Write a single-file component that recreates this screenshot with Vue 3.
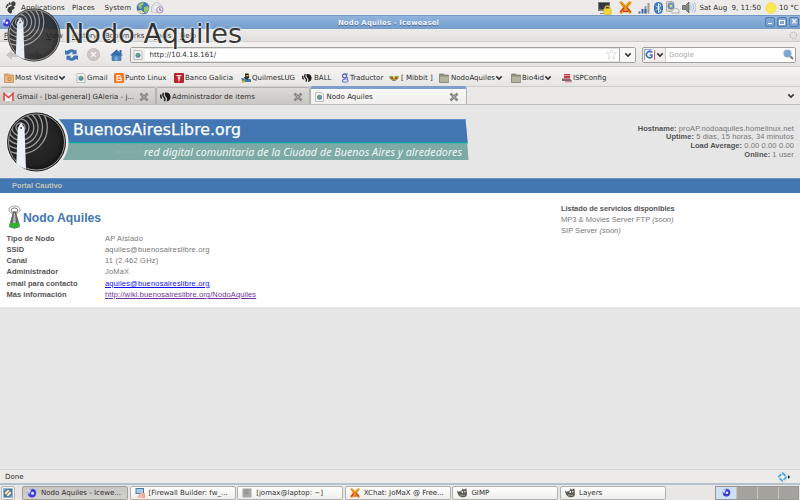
<script setup>
const menus = ['File', 'Edit', 'View', 'History', 'Bookmarks', 'Tools', 'Help']

const bookmarks = [
  { icon: 'folder-star', label: 'Most Visited', w: 72, gap: 11, more: true },
  { icon: 'page', label: 'Gmail', w: 38, gap: 11 },
  { icon: 'blogger', label: 'Punto Linux', w: 60, gap: 11 },
  { icon: 'galicia', label: 'Banco Galicia', w: 67, gap: 11 },
  { icon: 'penguin', label: 'QuilmesLUG', w: 61, gap: 11 },
  { icon: 'ball', label: 'BALL', w: 38, gap: 12 },
  { icon: 'gletter', label: 'Traductor', w: 49, gap: 10 },
  { icon: 'mibbit', label: '[ Mibbit ]', w: 50, gap: 12 },
  { icon: 'folder', label: 'NodoAquiles', w: 72, gap: 12, more: true },
  { icon: 'folder', label: 'Bio4id', w: 51, gap: 11, more: true },
  { icon: 'isp', label: 'ISPConfig', w: 60, gap: 11 },
]

const status = [
  ['Hostname:', 'proAP.nodoaquiles.homelinux.net'],
  ['Uptime:', '5 dias, 15 horas, 34 minutos'],
  ['Load Average:', '0.00 0.00 0.00'],
  ['Online:', '1 user'],
]

const details = [
  { k: 'Tipo de Nodo', v: 'AP Aislado' },
  { k: 'SSID', v: 'aquiles@buenosaireslibre.org' },
  { k: 'Canal', v: '11 (2.462 GHz)' },
  { k: 'Administrador', v: 'JoMaX' },
  { k: 'email para contacto', v: 'aquiles@buenosaireslibre.org', link: 'new' },
  { k: 'Más información', v: 'http://wiki.buenosaireslibre.org/NodoAquiles', link: 'seen' },
]

const tasks = [
  { icon: 'weasel', label: 'Nodo Aquiles - Icewe...', active: true },
  { icon: 'firewall', label: '[Firewall Builder: fw_...' },
  { icon: 'terminal', label: '[jomax@laptop: ~]' },
  { icon: 'xchat', label: 'XChat: JoMaX @ Free...' },
  { icon: 'gimp', label: 'GIMP' },
  { icon: 'gimp', label: 'Layers' },
]
</script>

<template>
  <div class="screen">
    <svg class="defs" width="0" height="0">
      <defs>
        <radialGradient id="disc" cx="45%" cy="45%" r="60%">
          <stop offset="0" stop-color="#2c2c2c" /><stop offset=".75" stop-color="#222" /><stop offset="1" stop-color="#0c0c0c" />
        </radialGradient>
        <clipPath id="discClip"><circle cx="30" cy="30" r="27.5" /></clipPath>
        <symbol id="logo" viewBox="0 0 60 60">
          <circle cx="30" cy="30" r="29.5" fill="#222" />
          <circle cx="30" cy="30" r="28" fill="url(#disc)" stroke="#aaa" stroke-width=".9" />
          <g clip-path="url(#discClip)" fill="none" stroke="#9c9c9c" stroke-width="1.300">
            <circle cx="14" cy="15.500" r="4.500" /><circle cx="14" cy="15.500" r="8.500" /><circle cx="14.500" cy="15.500" r="12.800" />
            <circle cx="14.500" cy="15.500" r="17" /><circle cx="14.500" cy="15.500" r="21.500" /><circle cx="14.500" cy="15.500" r="26.300" />
          </g>
          <path d="M14.600 10.500 L11.300 16 L9.800 52 Q14 55.500 19.500 57 L18 16 Z" fill="#edf0f8" />
          <circle cx="14.600" cy="16" r=".9" fill="#333" />
        </symbol>
        <symbol id="page" viewBox="0 0 10 10">
          <path d="M1 .5h6.500l1.500 1.500v7.500h-8z" fill="#f2f2ee" stroke="#aaa" stroke-width=".7" />
          <circle cx="5" cy="5.300" r="2.500" fill="#5c8baa" /><path d="M3.200 4.500l2-1.500 1 1.500-1.500 1.500z" fill="#75a96e" />
        </symbol>
        <symbol id="folder" viewBox="0 0 10 10">
          <path d="M.5 1h4l1 1h4v7.500h-9z" fill="#8e907d" stroke="#777966" stroke-width=".7" /><path d="M1 3.500h8.500v5.500h-8.500z" fill="#b3b49e" />
        </symbol>
        <symbol id="folder-star" viewBox="0 0 10 10">
          <path d="M.5 1h4l1 1h4v7.500h-9z" fill="#dca56f" stroke="#c58b55" stroke-width=".7" /><path d="M1 3.500h8v5.500h-8z" fill="#e9b887" />
          <circle cx="5.500" cy="6" r="1.700" fill="none" stroke="#c77b34" stroke-width=".9" />
        </symbol>
        <symbol id="blogger" viewBox="0 0 10 10">
          <rect width="10" height="10" rx="1.500" fill="#f5741c" />
          <path d="M3 2.500h2.500a1.300 1.300 0 0 1 0 2.500h-2.500h3a1.400 1.400 0 0 1 0 2.800h-3z" fill="none" stroke="#fff" stroke-width="1.100" />
        </symbol>
        <symbol id="galicia" viewBox="0 0 10 10">
          <rect width="10" height="10" rx="1" fill="#b9232d" /><path d="M2.500 2h5v1.200h-2v5.300h-1.200v-5.300h-1.800z" fill="#f7dede" /><circle cx="5" cy="5" r="1.300" fill="#f7dede" />
        </symbol>
        <symbol id="penguin" viewBox="0 0 10 10">
          <path d="M4 .5h3.500l.8 4-2 1.500h-2z" fill="#20252c" /><path d="M0 5l3 .5 1 1.500 3-1.500 3 1v2.500h-8z" fill="#397aa0" /><path d="M3 4h4v2.500h-3z" fill="#2a3036" /><path d="M5 2h2.500v1.500h-2z" fill="#e9ad28" /><path d="M.5 7.500h3.500v2h-3z" fill="#cfae37" />
        </symbol>
        <symbol id="ball" viewBox="0 0 11 10">
          <path d="M5 .6q5-.6 5.600 4.200q-.2 4-4.100 4.700q1.500-3-.5-4.500q-1.800-2-1-4.400z" fill="#1b1b1b" />
          <path d="M3.600.8q-1.500 2.700.4 4.500t.2 3.700M1.200 2.500q-1.200 2.200.6 4" fill="none" stroke="#222" stroke-width="1.500" />
        </symbol>
        <symbol id="gletter" viewBox="0 0 10 10">
          <circle cx="4.500" cy="3" r="2" fill="none" stroke="#5b60cf" stroke-width="1.300" /><path d="M5 1h3M6 4q3 1 1 2q3 3-2 3.200q-4 0-2-2.500l3-1" fill="none" stroke="#6b70d8" stroke-width="1.100" />
        </symbol>
        <symbol id="mibbit" viewBox="0 0 11 10">
          <path d="M0 3l3-.5 2.500 1 2.500-1 3 .5-1 3-2 1h-5l-2-1z" fill="#8fae31" /><path d="M2 4.200h2.800v2.300h-2.800zM6.200 4.200h2.800v2.300h-2.800z" fill="#c1411f" /><path d="M4.600 4h1.600l-.6 2z" fill="#eee" /><path d="M3 7h5l-1 1h-3z" fill="#477b28" />
        </symbol>
        <symbol id="isp" viewBox="0 0 10 10">
          <path d="M2 1h6v1.500h-6zM2 3h6v2h-6z" fill="#c34048" /><path d="M0 5.500h8l2 2.500h-10z" fill="#6c6c70" /><path d="M1 6.300h6M3 8.800h7" stroke="#d44b50" stroke-width=".8" />
        </symbol>
        <symbol id="weasel" viewBox="0 0 10 10">
          <circle cx="5" cy="5" r="4.500" fill="#9a9df0" /><path d="M5 1q4 0 4 4t-4 4.500q-4-.5-4-4l2 1q0-3 2-5.500z" fill="#3a3ecb" /><circle cx="5.500" cy="5.300" r="1.500" fill="#e5e9fb" /><circle cx="2" cy="3" r="1.400" fill="#d5dafa" />
        </symbol>
        <symbol id="firewall" viewBox="0 0 10 10">
          <rect x=".5" width="8.500" height="6" fill="#4e7ca8" /><rect x="1.500" y="1" width="6.500" height="4" fill="#a8cae4" /><path d="M2 9.500l4-5 4 1v4.500z" fill="#ef9b7c" /><path d="M3 8h6M5 6h4M6 6v4" stroke="#fbe0d4" stroke-width=".6" />
        </symbol>
        <symbol id="terminal" viewBox="0 0 10 10"><rect x=".5" y=".5" width="9" height="9" rx="1" fill="#a6a6a4" stroke="#cfcfcd" /><path d="M2 2.500h5M2 4h4M2 5.500h5" stroke="#8a8a88" stroke-width=".7" /></symbol>
        <symbol id="xchat" viewBox="0 0 10 10">
          <path d="M0 1l2-1 3 3 3-3 2 1-3 4 3 4-2 1-3-3-3 3-2-1 3-4z" fill="#f0a020" /><path d="M1 8.500l3-3.500M9 8.500l-3-3.500M3 8h4" stroke="#c9441d" stroke-width="1.200" /><path d="M1.500 1.500l3.500 3.500 3.500-3.500" fill="none" stroke="#d06e12" stroke-width=".7" />
        </symbol>
        <symbol id="gimp" viewBox="0 0 10 10">
          <path d="M0 2.500l1.500 1.200q2-.3 3.500-1.500l.5-2 1.500 1.500 2.300-1.500q.9 4.500.4 7t-4.700 2q-4.500-.5-5-6.700z" fill="#5e5a51" /><circle cx="5.300" cy="4" r=".9" fill="#ece9e2" /><circle cx="7.800" cy="3.700" r=".8" fill="#ece9e2" /><path d="M3 7l5 .5" stroke="#b5aea0" stroke-width=".8" />
        </symbol>
        <symbol id="chev" viewBox="0 0 8 6"><path d="M1.300 1.400l2.700 2.700 2.700-2.700" fill="none" stroke="#333" stroke-width="1.500" /></symbol>
        <symbol id="close" viewBox="0 0 10 10"><path d="M1.500 1.500l7 7M8.500 1.500l-7 7" stroke="#858580" stroke-width="2.600" /><path d="M2.500 2.500l5 5M7.500 2.500l-5 5" stroke="#b1b1ac" stroke-width=".8" /></symbol>
      </defs>
    </svg>

    <header class="panel">
      <svg class="foot" viewBox="0 0 12 14"><ellipse cx="8.500" cy="3" rx="2.500" ry="2.700" /><ellipse cx="4.500" cy="3" rx="1.200" ry="1.700" /><ellipse cx="2.200" cy="4.500" rx="1" ry="1.400" /><ellipse cx="1" cy="6.500" rx=".8" ry="1.100" /><path d="M3 7q5-3 7 0q0 2-3 3q1 2-1 3.500q-3 0-4-4z" /></svg>
      <nav class="panel-menu"><span class="apps">Applications</span><span class="places">Places</span><span class="system">System</span></nav>
      <svg class="globe" viewBox="0 0 14 14"><circle cx="7" cy="7" r="6.300" fill="#4279b8" /><path d="M2 4q3-3 6-3l-1 3-2 1 1 2-2 1zM8 6l4-1 1 3-3 4-2-2z" fill="#9cc56a" /><path d="M1 10q2 4 8 2l-4-3z" fill="#e3d79e" /></svg>
      <svg class="mail" viewBox="0 0 14 14"><path d="M.7 6l5-5 6 4v7h-11z" fill="#eee" stroke="#aaa" stroke-width=".7" /><path d="M3 5h6v4h-6z" fill="#fff" stroke="#bbb" stroke-width=".6" /><circle cx="9.500" cy="9.500" r="3.500" fill="#e7deef" stroke="#a68bb8" /><path d="M9.500 7v3h2" fill="none" stroke="#8b6aa5" /></svg>
      <div class="tray">
        <svg class="t-lock" viewBox="0 0 14 14"><path d="M0 1h12v9h-12z" fill="#777" /><path d="M1 2h10v6h-10z" fill="#35383a" /><path d="M2 12h7v1h-7z" fill="#888" /><path d="M7 8q0-3 2.500-3t2.500 3" fill="none" stroke="#d9ba20" stroke-width="1.300" /><rect x="5.700" y="7.500" width="7.500" height="6" rx="1" fill="#f1d836" stroke="#c6a91e" stroke-width=".5" /></svg>
        <svg class="t-x"><use href="#xchat" /></svg>
        <svg class="t-sig" viewBox="0 0 12 12"><path d="M.5 9.500h2v2h-2z" fill="#3564a6" /><path d="M3.500 7h2v4.500h-2z" fill="#3564a6" /><path d="M6.500 4h2v7.500h-2zM9.500 1h2v10.500h-2z" fill="#999" /><path d="M6.500 7h2v4.500h-2z" fill="#3564a6" /></svg>
        <svg class="t-bt" viewBox="0 0 9 12"><rect width="9" height="12" rx="4.500" fill="#3c77bd" /><path d="M2 3.500l5 5-2.500 2v-9l2.500 2-5 5" fill="none" stroke="#fff" stroke-width=".9" /></svg>
        <svg class="t-net" viewBox="0 0 14 13"><rect x=".5" y=".5" width="7" height="10" rx="1" fill="#d7d7d0" stroke="#999" stroke-width=".7" /><circle cx="5" cy="5" r="3.200" fill="#6c9cc9" stroke="#777" stroke-width=".6" /><circle cx="5" cy="5" r="1.300" fill="#e9d66d" /><path d="M6 12q-1.500-2 1-3 1-3 4-1.500 3 1 2 4.500z" fill="#eee" stroke="#999" stroke-width=".7" /></svg>
        <svg class="t-vol" viewBox="0 0 14 13"><path d="M.5 4.500h3l3.500-3.500v11l-3.500-3.500h-3z" fill="#888" stroke="#555" stroke-width=".7" /><path d="M8.500 4q1.500 2.500 0 5M10.300 2.500q3 4 0 8M12 1q4 5.500 0 11" fill="none" stroke="#8fb1de" stroke-width=".8" /></svg>
        <span class="clock">Sat Aug&nbsp; 9, 11:50</span>
        <svg class="t-sun" viewBox="0 0 12 12"><circle cx="6" cy="6" r="5.300" fill="#f9e84f" stroke="#eedb57" stroke-width=".7" /></svg>
        <span class="temp">10 °C</span>
      </div>
    </header>

    <div class="titlebar">
      <svg class="wicon"><use href="#weasel" /></svg>
      <b>Nodo Aquiles - Iceweasel</b>
      <div class="wbtns"><i class="min"></i><i class="max"></i><i class="cls">×</i></div>
    </div>

    <div class="menubar">
      <span v-for="m in menus" :key="m" :class="'m-' + m.toLowerCase()"><u>{{ m[0] }}</u>{{ m.slice(1) }}</span>
      <svg class="throbber" viewBox="0 0 10 10"><circle cx="5" cy="5" r="3.500" fill="none" stroke="#bbb" stroke-width="1.500" stroke-dasharray="1.500 1.250" /></svg>
    </div>

    <div class="toolbar">
      <svg class="arrow" viewBox="0 0 14 12"><path d="M0 6l6-5v3h7v4h-7v3z" fill="#c6c6c4" /></svg>
      <svg class="arrow fwd" viewBox="0 0 14 12"><path d="M14 6l-6-5v3h-7v4h7v3z" fill="#bdbdbb" /></svg>
      <svg class="reload" viewBox="0 0 13 12"><path d="M0 5.500v-4.500l1.700 1q4-3.300 8.300-.6l1.500-1v4.800h-4.700l1.400-1.500q-2.500-1.500-4.200 1.800z" fill="#3c76b5" /><path d="M13 6.500v4.500l-1.700-1q-4 3.300-8.300.6l-1.500 1v-4.800h4.700l-1.400 1.500q2.500 1.500 4.200-1.800z" fill="#3c76b5" /></svg>
      <svg class="stop" viewBox="0 0 13 13"><circle cx="6.500" cy="6.500" r="6" fill="#cdc7c7" stroke="#bfb8b8" /><path d="M4.200 4.200l4.600 4.600M8.800 4.200l-4.600 4.600" stroke="#f5f2f2" stroke-width="1.500" /></svg>
      <svg class="home" viewBox="0 0 13 12"><path d="M2 5.500h9v6h-9z" fill="#4f87c0" stroke="#3868a0" stroke-width=".6" /><path d="M0 6.500l6.500-6 6.500 6z" fill="#386ca9" /><path d="M9.500 1h2v4h-2z" fill="#386ca9" /><path d="M5 7.500h2.500v4h-2.500z" fill="#7fabd7" /></svg>
      <div class="url">
        <span class="favi"><svg><use href="#page" /></svg></span>
        <span class="addr">http://10.4.18.161/</span>
        <svg class="star" viewBox="0 0 10 10"><path d="M5 .6l1.300 3h3.200l-2.500 2.100.9 3.500-2.900-2-2.900 2 .9-3.500-2.500-2.100h3.200z" fill="#fff" stroke="#ccc" stroke-width=".6" /></svg>
        <span class="drop"><svg><use href="#chev" /></svg></span>
      </div>
      <div class="search">
        <span class="engine"><svg class="g" viewBox="0 0 10 10"><rect width="10" height="10" fill="#fff" /><path d="M.4 10v-9.500h7" fill="none" stroke="#62a962" stroke-width=".8" /><path d="M9.600 1v9" stroke="#e45449" stroke-width=".9" /><path d="M1 .5h6" stroke="#8da9df" /><path d="M7.500 3.200q-2.500-2-4.500 0t0 4q2 1.600 4.200.2v-2h-2.200" fill="none" stroke="#3f65c5" stroke-width="1.400" /></svg><svg class="chev"><use href="#chev" /></svg></span>
        <span class="hint">Google</span>
        <svg class="lens" viewBox="0 0 11 11"><path d="M6 6l4 4" stroke="#777" stroke-width="2" /><circle cx="4.500" cy="4.500" r="3.500" fill="#74aadb" stroke="#93a9c0" stroke-width="1.200" /></svg>
      </div>
    </div>

    <div class="bookmarks">
      <div v-for="b in bookmarks" :key="b.label" class="bm" :style="{ width: b.w + 'px' }">
        <span class="bm-icon" :style="{ width: b.gap + 'px' }"><svg><use :href="'#' + b.icon" /></svg></span>
        <span>{{ b.label }}</span>
        <svg v-if="b.more" class="chev"><use href="#chev" /></svg>
      </div>
    </div>

    <div class="tabs">
      <div class="tab t1"><svg class="ti" viewBox="0 0 11 10"><path d="M0 1h11v8h-11z" fill="#f6eeee" /><path d="M1 9v-7.500l4.500 4 4.500-4v7.500" fill="none" stroke="#db4440" stroke-width="1.600" /></svg><span>Gmail - [bal-general] GAleria - j...</span><svg class="x"><use href="#close" /></svg></div>
      <div class="tab t2"><svg class="ti"><use href="#ball" /></svg><span>Administrador de items</span><svg class="x"><use href="#close" /></svg></div>
      <div class="tab t3"><svg class="ti"><use href="#page" /></svg><span>Nodo Aquiles</span><svg class="x"><use href="#close" /></svg></div>
      <svg class="alltabs"><use href="#chev" /></svg>
    </div>

    <main class="page">
      <div class="masthead">
        <svg class="banner" viewBox="0 0 470 73">
          <path d="M55 14.200H465.500L468.500 55H55Z" fill="#7eaaa6" />
          <path d="M55 14.200H465.500L467.700 37H55Z" fill="#4377b3" />
          <path d="M55 14.500H465.500" stroke="#6695c8" />
          <path d="M60 37.600H468" stroke="#0aa9a4" stroke-width="1.400" />
          <circle cx="37" cy="37" r="31.500" fill="#e9eaea" />
          <use href="#logo" x="6.500" y="7" width="60" height="60" />
          <path d="M117 47h26" stroke="#9bbebb" stroke-width="4" stroke-dasharray="1 1" opacity=".35" />
          <text x="73" y="30" class="brand" textLength="168">BuenosAiresLibre.org</text>
          <text x="144" y="50.500" class="tagline" textLength="318">red digital comunitaria de la Ciudad de Buenos Aires y alrededores</text>
        </svg>
        <div class="stats"><div v-for="s in status" :key="s[0]"><b>{{ s[0] }}</b> {{ s[1] }}</div></div>
      </div>
      <div class="nav">Portal Cautivo</div>
      <div class="content">
        <section class="node">
          <h1>
            <svg class="antenna" viewBox="0 0 13 25"><g fill="none" stroke="#999" stroke-width="1"><ellipse cx="6.500" cy="5" rx="5.800" ry="4" /><ellipse cx="6.500" cy="5.500" rx="3.500" ry="2.400" stroke="#777" /></g><path d="M5.500 7h2l4 14q-5 4-10 0z" fill="#6a6a6a" stroke="#333" stroke-width=".6" /><path d="M6 8h1l.8 11h-3z" fill="#bbb" /><path d="M2 18q4.500 2 9 0l1 4q-5.500 4-11 0z" fill="#27b52c" /><path d="M1 22q5.500 4 11 0v1q-5.500 3-11 0z" fill="#234c20" /></svg>
            <span>Nodo Aquiles</span>
          </h1>
          <dl>
            <template v-for="d in details" :key="d.k"><dt>{{ d.k }}</dt><dd><a v-if="d.link" :class="d.link">{{ d.v }}</a><template v-else>{{ d.v }}</template></dd></template>
          </dl>
        </section>
        <aside class="services">
          <b>Listado de servicios disponibles</b>
          <div>MP3 &amp; Movies Server FTP <em>(soon)</em></div>
          <div>SIP Server <em>(soon)</em></div>
        </aside>
      </div>
    </main>

    <div class="statusbar"><span>Done</span><svg viewBox="0 0 13 10"><path d="M4.500 1l4 4-4 4-4-4z" fill="#f3f8fb" stroke="#55a9dc" stroke-width="1.900" stroke-dasharray="4.200 1.400" /><path d="M10 3l2.200 2-2.200 2z" fill="#333" /></svg></div>

    <footer class="taskbar">
      <div class="desk"><svg viewBox="0 0 10 10"><rect x=".5" y=".5" width="9" height="9" fill="#3f77a6" /><path d="M5 1.500l3.500 3.500-3.500 3.500-3.500-3.500z" fill="#f5f3dc" /><path d="M0 0h2.500v2.500h-2.500zM7.500 7.500h2.500v2.500h-2.500z" fill="#89b2d1" /><path d="M3 7l4.500-4.500" stroke="#be9642" stroke-width="1.200" /></svg></div>
      <div class="tasks"><div v-for="t in tasks" :key="t.label" class="task" :class="{ active: t.active }"><svg><use :href="'#' + t.icon" /></svg><span>{{ t.label }}</span></div></div>
      <div class="spaces"><i class="on"><svg><use href="#weasel" /></svg></i><i></i><i></i><i></i></div>
    </footer>

    <div class="overlay"><svg class="mark"><use href="#logo" /></svg><span>Nodo Aquiles</span></div>
  </div>
</template>

<style>
body { margin: 0; overflow: hidden; }
</style>

<style scoped>
* { box-sizing: border-box; }
.screen { position: relative; width: 800px; height: 500px; overflow: hidden; display: flex; flex-direction: column; background: #ebeae8; font: 7.07px/10px "DejaVu Sans", sans-serif; color: #303030; white-space: nowrap; }
.defs { position: absolute; }
svg { display: block; flex: none; }
.panel { height: 15px; flex: none; display: flex; align-items: center; background: #ecebe9; padding-left: 5px; }
.foot { width: 12px; height: 13px; fill: #3d3f3d; }
.panel-menu { display: flex; padding-left: 4px; letter-spacing: .05px; }
.apps { width: 51px; }
.places { width: 32.500px; }
.system { width: 31.500px; }
.globe { width: 14px; height: 14px; }
.mail { width: 13px; height: 13px; margin-left: 1px; }
.tray { margin-left: auto; display: flex; align-items: center; }
.t-lock { width: 14px; height: 14px; margin-right: 7px; }
.t-x { width: 13px; height: 13px; margin-right: 6px; }
.t-sig { width: 12px; height: 12px; margin-right: 4px; }
.t-bt { width: 9px; height: 12px; margin-right: 3px; }
.t-net { width: 14px; height: 13px; margin-right: 2px; }
.t-vol { width: 14px; height: 13px; margin-right: 3.500px; }
.clock { width: 65.500px; }
.t-sun { width: 12px; height: 12px; }
.temp { width: 21px; margin-left: 2px; }
.titlebar { height: 14px; flex: none; display: grid; grid-template-columns: 100px 1fr 100px; align-items: center; background: linear-gradient(#5c83b5 0, #91b4dd 8%, #83a9d6 50%, #769ecb 100%); text-align: center; padding-right: 1px; }
.titlebar b { font-size: 7px; letter-spacing: .11px; color: #eff4fb; text-shadow: 0 1px #4c6d97; padding: 1px 22px 0 0; }
.wicon { width: 9px; height: 9px; margin-left: 2px; }
.wbtns { display: flex; gap: 2px; justify-content: flex-end; }
.wbtns i { width: 10px; height: 10px; border: 1px solid #527cae; border-radius: 2px; background: #7da4d4; color: #fff; display: flex; align-items: center; justify-content: center; font: bold 8px/8px "DejaVu Sans", sans-serif; }
.min::before { content: ""; width: 4px; height: 1px; margin-top: 3px; background: #fff; }
.max::before { content: ""; width: 4px; height: 3px; border: 1px solid #fff; }
.menubar { height: 13px; flex: none; display: flex; align-items: center; padding: 1px 2px 0 4px; background: linear-gradient(#ecebea, #e1e0de); border-bottom: 1px solid #cfcecb; }
.m-file { width: 20px; }
.m-edit { width: 22px; }
.m-view { width: 26px; }
.m-history { width: 33px; }
.m-bookmarks { width: 49px; }
.m-tools { width: 26px; }
.throbber { width: 9px; height: 9px; margin-left: auto; }
.toolbar { height: 25px; flex: none; display: flex; align-items: center; background: linear-gradient(#f3f2f1, #e5e4e2); border-bottom: 1px solid #cdccc9; padding: 1px 0 0 6px; }
.arrow { width: 14px; height: 12px; }
.fwd { margin-left: 8px; }
.reload { width: 13px; height: 12px; margin-left: 23px; }
.stop { width: 13px; height: 13px; margin-left: 9px; }
.home { width: 13px; height: 12px; margin-left: 10px; }
.url { width: 506px; height: 16px; margin-left: 7px; border: 1px solid #a2a19d; border-radius: 2px; background: #fff; display: flex; align-items: center; box-shadow: inset 0 0 0 .5px #c9c8c4; }
.favi { width: 14px; height: 14px; padding: 2px; background: #eeedeb; }
.favi svg { width: 10px; height: 10px; }
.addr { padding-left: 4.500px; }
.star { width: 11px; height: 11px; margin-left: auto; margin-right: 2px; }
.drop { width: 16px; height: 14px; border-left: 1px solid #aaa9a5; display: grid; place-items: center; background: #f7f7f6; }
.drop svg { width: 8px; height: 6px; }
.search { width: 154px; height: 16px; margin-left: 6px; border: 1px solid #a2a19d; border-radius: 2px; background: #fff; display: flex; align-items: center; }
.engine { width: 23px; height: 14px; background: #efeeec; border-right: 1px solid #ccc; display: flex; align-items: center; padding-left: 1px; gap: 1px; }
.g { width: 11px; height: 11px; }
.chev { width: 8px; height: 6px; }
.hint { padding-left: 3px; color: #aaa; }
.lens { width: 11px; height: 11px; margin-left: auto; margin-right: 1px; }
.bookmarks { height: 20px; flex: none; display: flex; align-items: center; padding: 2px 0 0 4px; background: linear-gradient(#f6f5f4, #e6e5e3); border-bottom: 1px solid #cfcecc; }
.bm { display: flex; align-items: center; flex: none; }
.bm-icon svg { width: 10px; height: 10px; }
.tabs { height: 18px; flex: none; display: flex; align-items: flex-end; background: #eae9e7; border-bottom: 1px solid #bdbbb8; padding-right: 5px; }
.tab { height: 17px; display: flex; align-items: center; padding-top: 2px; border: 1px solid #b4b2ae; border-bottom: 0; background: linear-gradient(#dcdad7, #c9c7c3); border-radius: 2px 2px 0 0; }
.ti { width: 11px; height: 10px; }
.x { width: 10px; height: 10px; margin-left: auto; }
.t1 { width: 156px; padding-left: 3px; padding-right: 6px; border-left: 0; }
.t1 span { padding-left: 3px; }
.t2 { width: 154px; padding-left: 3px; padding-right: 6px; }
.t2 span { padding-left: 1px; }
.t3 { width: 157px; height: 18px; padding: 1px 7px 0 3px; background: linear-gradient(#f8f8f7, #f0efee); border-top: 3px solid #7d9fce; border-radius: 3px 3px 0 0; }
.t3 span { padding-left: 1.500px; }
.alltabs { width: 8px; height: 6px; margin: 0 0 5px auto; }
.page { flex: 1; background: #e6e6e6; font: 7.5px/8.8px "Liberation Sans", Arial, sans-serif; letter-spacing: .13px; color: #777; }
.masthead { height: 73px; display: flex; justify-content: space-between; padding-right: 6px; }
.banner { width: 470px; height: 73px; }
.brand { font: 15.700px "DejaVu Sans", sans-serif; fill: #fff; stroke: #fff; stroke-width: .25px; letter-spacing: 0; }
.tagline { font: italic 10.700px "Noto Sans", sans-serif; fill: #eef5f4; letter-spacing: 0; }
.stats { padding-top: 19.500px; text-align: right; }
b, dt { color: #555; letter-spacing: 0; }
dt { font-weight: bold; }
.nav { height: 15px; background: #4377b1; border-top: 1px solid #6a93c2; padding: 2px 12px; font-weight: bold; line-height: 10px; color: #c3c3b5; letter-spacing: -.05px; }
.content { height: 114px; background: #fff; display: flex; padding: 11px 6px 0; }
.node { width: 555px; }
h1 { margin: 0; height: 28px; display: flex; align-items: center; font: bold 12.200px/14px "Liberation Sans", Arial, sans-serif; color: #4377b1; letter-spacing: 0; }
.antenna { width: 13px; height: 24px; margin: -2px 2px 0 2px; }
dl { margin: 0; display: grid; grid-template-columns: 98.500px 1fr; grid-auto-rows: 11.300px; line-height: 11.300px; padding: .5px 0 0 .5px; }
dd { margin: 0; letter-spacing: .19px; }
dt { letter-spacing: .03px; }
a { text-decoration: underline; letter-spacing: .19px; }
.new { color: #1010ee; }
.seen { color: #7030a0; letter-spacing: .12px; }
.services { line-height: 11.300px; margin-top: -1.500px; letter-spacing: .02px; }
.services b { letter-spacing: -.07px; }
.statusbar { height: 14px; flex: none; border-top: 1px solid #d8d7d5; display: flex; align-items: center; justify-content: space-between; padding: 1px 9px 0 5px; background: #ecebe9; }
.statusbar svg { width: 13px; height: 10px; }
.taskbar { height: 17px; flex: none; border-top: 2px solid #b5c2cd; background: #e8e7e5; display: flex; align-items: center; padding: 0 1px; }
.desk { width: 14px; height: 14px; border: 1px solid #bdbbb8; border-radius: 2px; padding: 1px; background: #f2f1f0; }
.desk svg { width: 10px; height: 10px; }
.tasks { display: grid; grid-template-columns: repeat(6, 106px); gap: 1.600px; padding-left: 7px; }
.task { height: 14px; display: flex; align-items: center; padding-left: 4px; border: 1px solid #b3b1ad; border-radius: 2px; background: linear-gradient(#fff, #efeeed); }
.task svg { width: 10px; height: 10px; }
.task span { padding-left: 4px; letter-spacing: -.02px; }
.active { background: linear-gradient(#c9c7c3, #d3d1cd); border-color: #a09e9a; }
.spaces { margin-left: auto; display: grid; grid-template-columns: repeat(4, 20px); gap: 1px; height: 14px; background: #c8c6c3; border: 1px solid #999793; width: 84px; overflow: hidden; }
.spaces i { background: #a6a29e; display: grid; place-items: center; }
.spaces .on { background: #cfdff5; }
.spaces svg { width: 9px; height: 9px; }
.overlay { position: absolute; left: 6.500px; top: 8px; display: flex; opacity: .86; color: #1c1c1c; font-size: 27.200px; line-height: 32px; text-shadow: 0 0 2px #fff, 0 0 2px #fff, 0 0 3px #fff; }
.mark { width: 54px; height: 54px; }
.overlay span { padding: 10px 0 0 3.500px; }
</style>
